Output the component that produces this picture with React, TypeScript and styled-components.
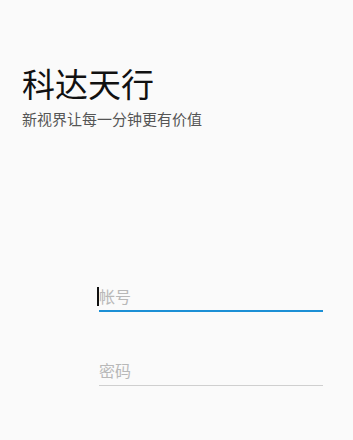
import React from "react";
import styled, { createGlobalStyle } from "styled-components";

const Global = createGlobalStyle`
  html, body { margin: 0; padding: 0; background: #fafafa; }
  body { font-family: "Noto Sans CJK SC", "Noto Sans", sans-serif; }
`;

const Page = styled.div`
  width: 353px;
  height: 440px;
  background: #fafafa;
  display: flex;
  flex-direction: column;
  overflow: hidden;
`;

const Header = styled.header`
  padding: 63px 0 0 22px;
  display: flex;
  flex-direction: column;
  gap: 6px;
`;

const Title = styled.h1`
  margin: 0;
  font-size: 33px;
  line-height: 40px;
  font-weight: 400;
  color: #111;
`;

const Subtitle = styled.p`
  margin: 0;
  font-size: 15px;
  line-height: 20px;
  color: #555;
`;

const Form = styled.div`
  margin: 153px 0 0 99px;
  width: 224px;
  display: flex;
  flex-direction: column;
  gap: 45px;
`;

const Field = styled.div<{ $active?: boolean }>`
  height: ${(p) => (p.$active ? "28px" : "25px")};
  padding-bottom: ${(p) => (p.$active ? "0" : "3px")};
  display: flex;
  align-items: center;
  border-bottom: ${(p) => (p.$active ? "2px solid #1c8fd5" : "1px solid #cfcfcf")};
`;

const Caret = styled.span`
  display: inline-block;
  width: 2px;
  height: 19px;
  background: #111;
  margin-left: -2px;
`;

const Placeholder = styled.span`
  font-size: 16px;
  line-height: 20px;
  color: #b8b8b8;
`;

export default function App() {
  return (
    <>
      <Global />
      <Page>
        <Header>
          <Title>科达天行</Title>
          <Subtitle>新视界让每一分钟更有价值</Subtitle>
        </Header>
        <Form>
          <Field $active>
            <Caret />
            <Placeholder>帐号</Placeholder>
          </Field>
          <Field>
            <Placeholder>密码</Placeholder>
          </Field>
        </Form>
      </Page>
    </>
  );
}
